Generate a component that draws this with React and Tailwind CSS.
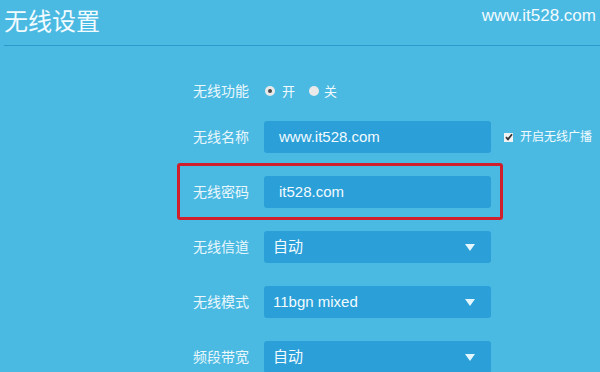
import React from "react";

const font = { fontFamily: '"Liberation Sans", "Noto Sans CJK SC", sans-serif' };

function Arrow() {
  return (
    <svg width="10" height="7" viewBox="0 0 10 7" className="block">
      <polygon points="0,0 10,0 5,7" fill="#e4f6ff" />
    </svg>
  );
}

function Row({ label, children, className = "" }) {
  return (
    <div className={"flex items-center h-[32px] " + className}>
      <div className="w-[71px] text-[14px] text-[#eaf7fd] leading-none">{label}</div>
      {children}
    </div>
  );
}

function Select({ value }) {
  return (
    <div className="w-[227px] h-[32px] rounded-[3px] bg-[#2a9fd8] flex items-center justify-between pl-[9px] pr-[16px]">
      <span className="text-[15px] text-[#f2fbff]">{value}</span>
      <Arrow />
    </div>
  );
}

function Input({ value }) {
  return (
    <div className="w-[227px] h-[32px] rounded-[3px] bg-[#2a9fd8] flex items-center pl-[15px]">
      <span className="text-[15px] text-[#f2fbff]">{value}</span>
    </div>
  );
}

export default function App() {
  return (
    <div className="w-[600px] h-[372px] overflow-hidden bg-[#4bbae2]" style={font}>
      <div className="ml-[4px] h-[46px] border-b border-[#2b9bcc] flex justify-between">
        <div className="text-[24px] text-[#f2fbff] leading-none pt-[10px]">无线设置</div>
        <div className="text-[17px] text-[#f2fbff] leading-none pt-[7px] pr-[4px]">www.it528.com</div>
      </div>

      <div className="pl-[193px]">
        <div className="flex items-center h-[20px] mt-[35px]">
          <div className="w-[72px] text-[14px] text-[#eaf7fd] leading-none">无线功能</div>
          <div className="w-[10px] h-[10px] rounded-full bg-[#e9e9e9] flex items-center justify-center">
            <div className="w-[4px] h-[4px] rounded-full bg-[#4a4a4a]" />
          </div>
          <span className="ml-[7px] text-[13px] text-[#f2fbff] leading-none">开</span>
          <div className="ml-[14px] w-[10px] h-[10px] rounded-full bg-[#e9e9e9]" />
          <span className="ml-[5px] text-[13px] text-[#f2fbff] leading-none">关</span>
        </div>

        <Row label="无线名称" className="mt-[20px]">
          <Input value="www.it528.com" />
          <div className="ml-[13px] w-[9px] h-[9px] bg-[#f2f2f2] flex items-center justify-center">
            <svg width="8" height="8" viewBox="0 0 8 8">
              <path d="M1 4.2 L3 6.4 L7 1.2" stroke="#333" strokeWidth="1.8" fill="none" />
            </svg>
          </div>
          <span className="ml-[7px] text-[12px] text-[#f2fbff] leading-none">开启无线广播</span>
        </Row>

        <div className="relative mt-[23px]">
          <Row label="无线密码">
            <Input value="it528.com" />
          </Row>
          <div className="absolute left-[-16px] top-[-13px] w-[326px] h-[57px] border-[3px] border-[#cf1f2c] rounded-[3px] pointer-events-none" />
        </div>

        <Row label="无线信道" className="mt-[23px]">
          <Select value="自动" />
        </Row>
        <Row label="无线模式" className="mt-[23px]">
          <Select value="11bgn mixed" />
        </Row>
        <Row label="频段带宽" className="mt-[23px]">
          <Select value="自动" />
        </Row>
      </div>
    </div>
  );
}
